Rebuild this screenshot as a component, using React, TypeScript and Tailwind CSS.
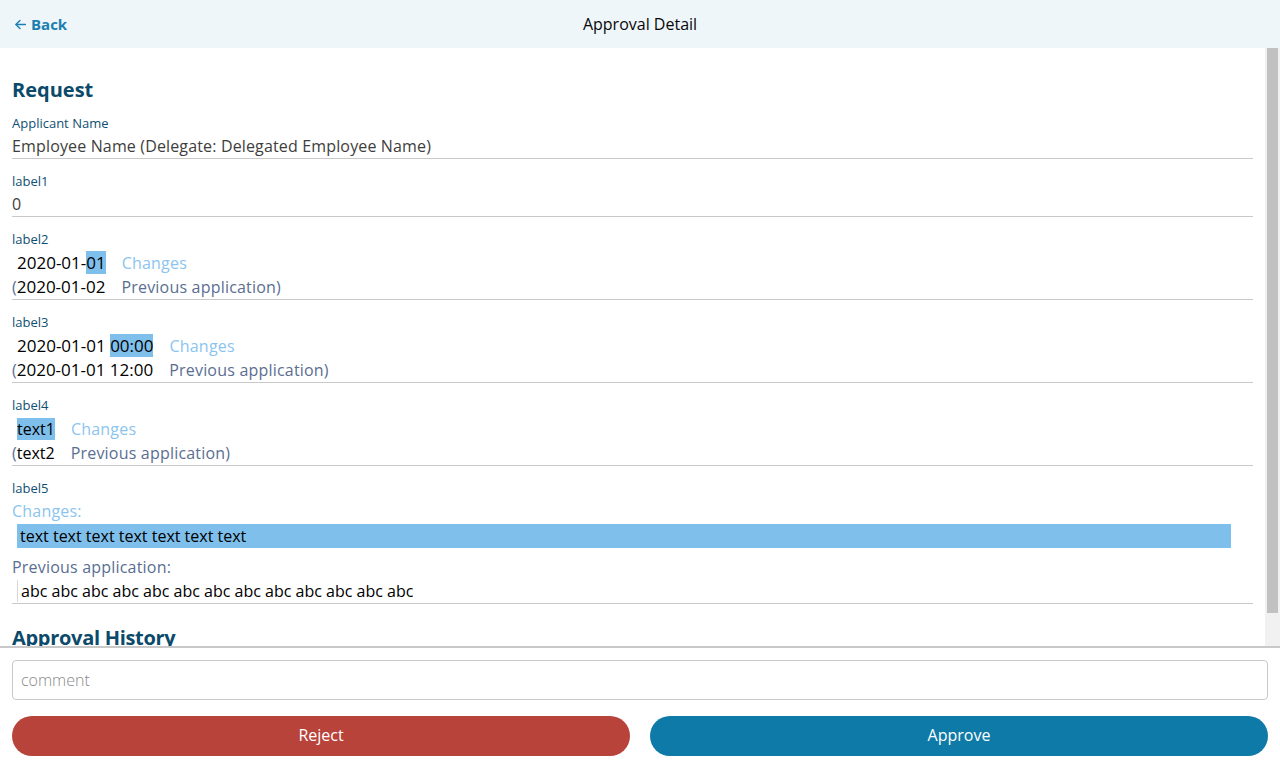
import type { ReactNode } from "react";

const FONT = { fontFamily: '"Open Sans", "Noto Sans", sans-serif' };

type Diff = {
  label: string;
  current: ReactNode;
  previous: string;
  wide?: boolean;
};

const DIFFS: Diff[] = [
  {
    label: "label2",
    current: (
      <>
        2020-01-<span className="bg-[#7fbfeb]">01</span>
      </>
    ),
    previous: "2020-01-02",
    wide: true,
  },
  {
    label: "label3",
    current: (
      <>
        2020-01-01 <span className="bg-[#7fbfeb]">00:00</span>
      </>
    ),
    previous: "2020-01-01 12:00",
    wide: true,
  },
  {
    label: "label4",
    current: <span className="bg-[#7fbfeb]">text1</span>,
    previous: "text2",
  },
];

function Label({ children }: { children: ReactNode }) {
  return <div className="h-5 text-[13px] leading-5 text-[#0f4f72]">{children}</div>;
}

function Field({ label, children, first }: { label: string; children: ReactNode; first?: boolean }) {
  return (
    <div className={`border-b border-[#c9c9c9] ${first ? "pt-[9px]" : "pt-3"}`}>
      <Label>{label}</Label>
      <div className="mt-[1px] h-6 text-base leading-6 tracking-[0.15px] text-[#3e3e3c]">{children}</div>
    </div>
  );
}

function DiffField({ diff }: { diff: Diff }) {
  const valueSize = diff.wide ? "text-[17px]" : "text-base";
  return (
    <div className="border-b border-[#c9c9c9] pt-3">
      <Label>{diff.label}</Label>
      <div className="mt-[2px] flex h-6 items-center pl-[5px] text-base leading-6">
        <span className={`${valueSize} text-black`}>{diff.current}</span>
        <span className="ml-4 tracking-[0.2px] text-[#8bc4ef]">Changes</span>
      </div>
      <div className="flex h-6 items-center text-base leading-6">
        <span className="text-[#5a6e91]">(</span>
        <span className={`${valueSize} text-black`}>{diff.previous}</span>
        <span className="ml-4 tracking-[0.2px] text-[#5a6e91]">Previous application)</span>
      </div>
    </div>
  );
}

function LongDiffField() {
  return (
    <div className="border-b border-[#c9c9c9] pt-3">
      <Label>label5</Label>
      <div className="mt-[1px] h-6 text-base leading-6 tracking-[0.2px] text-[#8bc4ef]">Changes:</div>
      <div className="ml-[5px] mr-[22px] mt-[1px] h-6 bg-[#7fbfeb] pl-[3px] text-base leading-6 text-black">
        text text text text text text text
      </div>
      <div className="mt-[7px] h-6 text-base leading-6 tracking-[0.2px] text-[#5a6e91]">Previous application:</div>
      <div className="ml-[5px] flex h-6 items-center">
        <div className="border-l border-[#d8d8d8] pl-[3px] text-base leading-[22px] text-black">
          abc abc abc abc abc abc abc abc abc abc abc abc abc
        </div>
      </div>
    </div>
  );
}

export default function App() {
  return (
    <div className="flex h-[768px] w-[1280px] flex-col overflow-hidden bg-white" style={FONT}>
      <header className="relative flex h-12 shrink-0 items-center bg-[#eef6fa] px-[14px]">
        <button className="flex items-center gap-[4px] text-[15px] font-bold text-[#1a7fb1]">
          <svg width="13" height="13" viewBox="0 0 24 24" fill="none" stroke="currentColor" strokeWidth="2.6" strokeLinecap="round" strokeLinejoin="round">
            <path d="M21 12H4" />
            <path d="M11 4.5L3.5 12l7.5 7.5" />
          </svg>
          Back
        </button>
        <div className="absolute left-1/2 -translate-x-1/2 text-base text-[#080707]">Approval Detail</div>
      </header>

      <div className="flex h-[598px] shrink-0 overflow-hidden">
        <main className="min-w-0 flex-1 pl-3 pr-3 pt-7">
          <h2 className="h-7 text-[20px] font-bold leading-7 text-[#0b4a6a]">Request</h2>
          <Field label="Applicant Name" first>
            Employee Name (Delegate: Delegated Employee Name)
          </Field>
          <Field label="label1">0</Field>
          {DIFFS.map((d) => (
            <DiffField key={d.label} diff={d} />
          ))}
          <LongDiffField />
          <h2 className="mt-[20px] h-7 text-[20px] font-bold leading-7 tracking-[-0.3px] text-[#0b4a6a]">
            Approval History
          </h2>
        </main>
        <div className="w-[15px] shrink-0 bg-[#f1f1f1] px-[2px]">
          <div className="h-[565px] bg-[#c1c1c1]" />
        </div>
      </div>

      <footer className="flex flex-1 flex-col gap-4 border-t-2 border-[#c9c9c9] px-3 pt-3">
        <input
          placeholder="comment"
          className="h-10 w-full rounded border border-[#c9c9c9] px-2 text-base font-light text-[#3e3e3c] outline-none placeholder:text-[#8a8a8a]"
        />
        <div className="flex gap-5">
          <button className="h-10 flex-1 rounded-full bg-[#b8433b] pb-[3px] text-base text-white">Reject</button>
          <button className="h-10 flex-1 rounded-full bg-[#0e7aa8] pb-[3px] text-base text-white">Approve</button>
        </div>
      </footer>
    </div>
  );
}
